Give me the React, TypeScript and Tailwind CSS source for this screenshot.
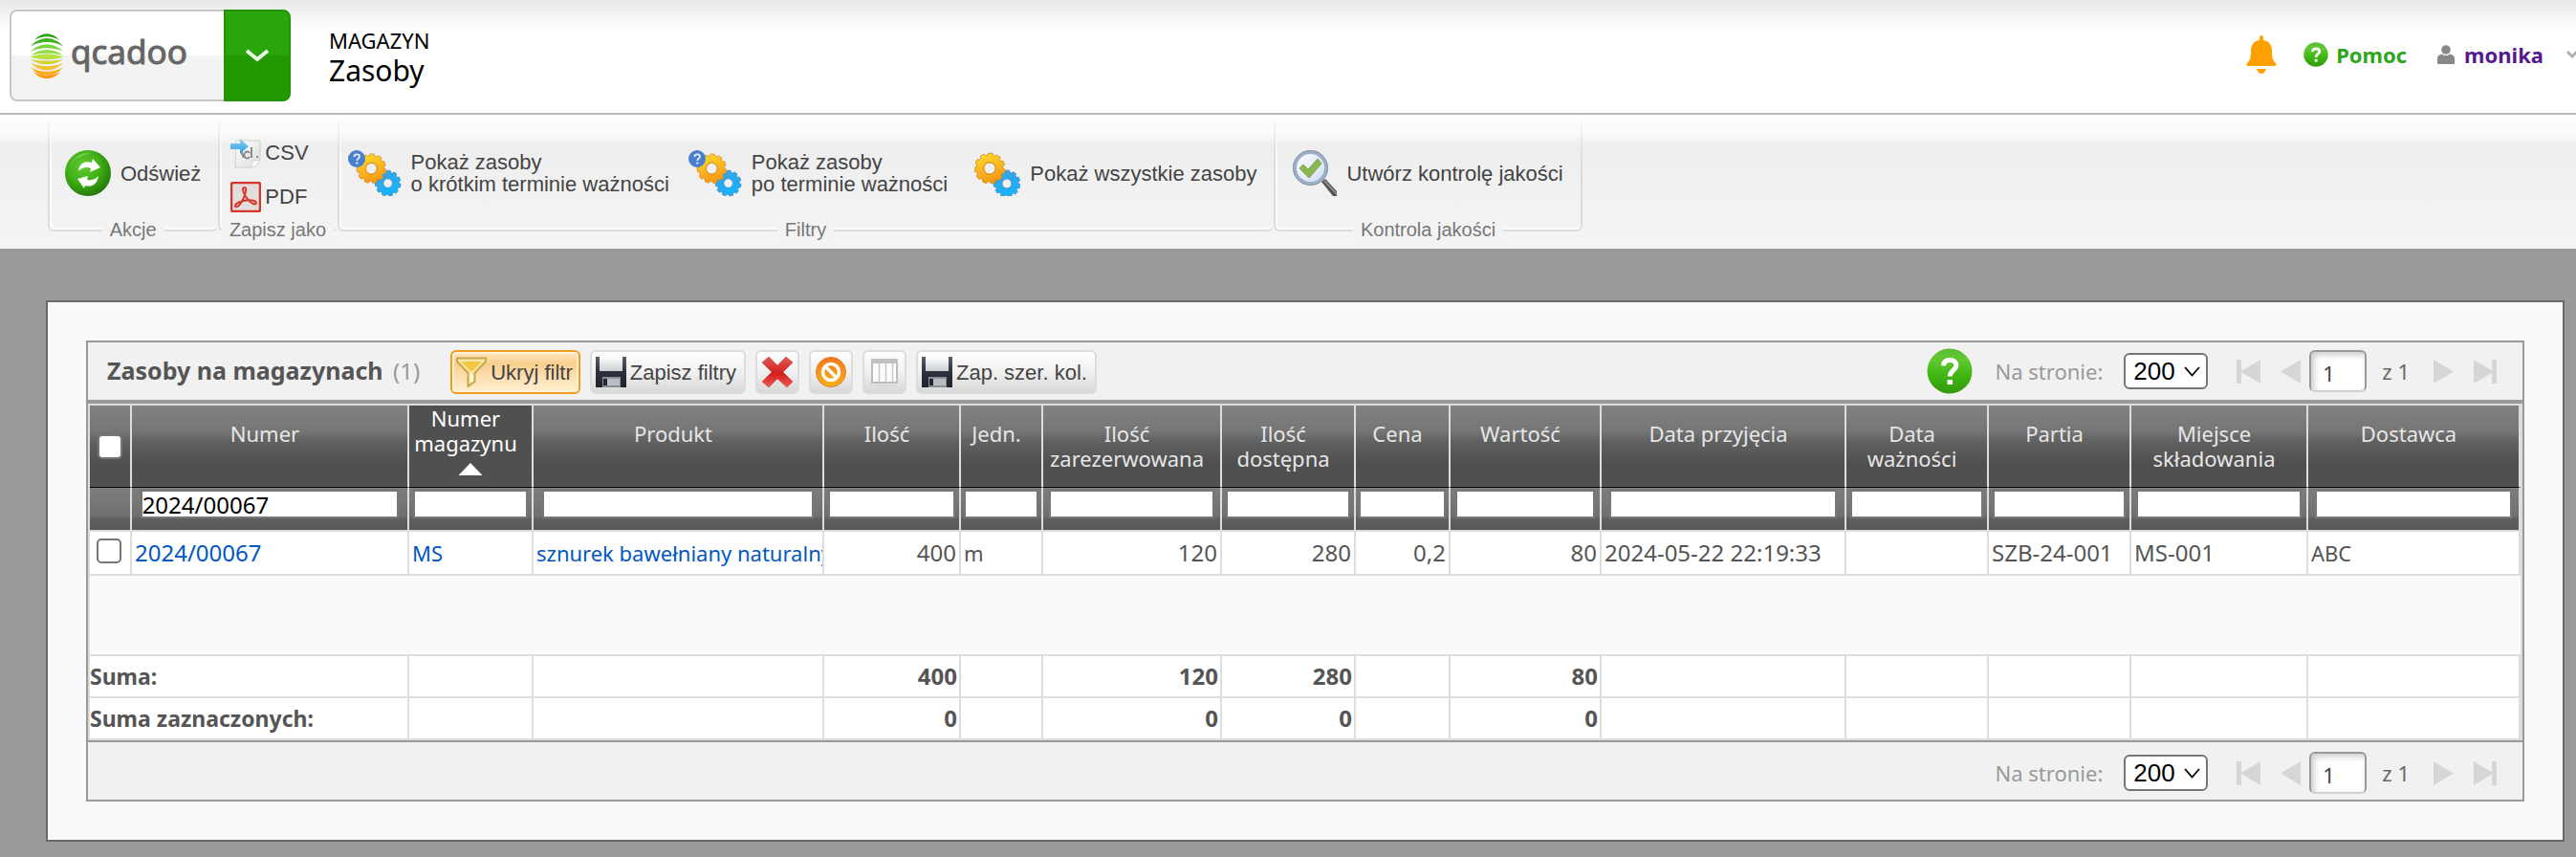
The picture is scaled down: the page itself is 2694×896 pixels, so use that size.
import type { ReactNode } from 'react';

const UI = "font-['Noto_Sans','Open_Sans',sans-serif]";
const ARIAL = "font-['Liberation_Sans',Arial,sans-serif]";

/* ---------- icons ---------- */

function gearPath(cx: number, cy: number, outer: number, inner: number, hole: number, teeth: number) {
  const step = (Math.PI * 2) / teeth;
  const at = (r: number, a: number) => `${(cx + r * Math.cos(a)).toFixed(2)} ${(cy + r * Math.sin(a)).toFixed(2)}`;
  let d = '';
  for (let i = 0; i < teeth; i++) {
    const a = i * step + 0.2;
    d += `${i ? 'L' : 'M'}${at(inner, a - step * 0.34)}L${at(outer, a - step * 0.24)}L${at(outer, a + step * 0.24)}L${at(inner, a + step * 0.34)}`;
  }
  return `${d}ZM${cx - hole} ${cy}a${hole} ${hole} 0 1 0 ${hole * 2} 0a${hole} ${hole} 0 1 0 ${-hole * 2} 0Z`;
}
const GOLD_GEAR = gearPath(16, 19, 16, 14, 6, 11);
const BLUE_GEAR = gearPath(34, 35, 14, 12, 5, 11);

function Defs() {
  return (
    <svg width="0" height="0" className="absolute" aria-hidden="true">
      <defs>
        <linearGradient id="gold" x1="0" y1="0" x2="0.3" y2="1">
          <stop offset="0" stopColor="#ffdf2e" />
          <stop offset="1" stopColor="#f79a12" />
        </linearGradient>
        <linearGradient id="blue" x1="0" y1="0" x2="0.4" y2="1">
          <stop offset="0" stopColor="#3f9fe0" />
          <stop offset="1" stopColor="#14b4ff" />
        </linearGradient>
        <radialGradient id="green" cx="0.4" cy="0.35" r="0.75">
          <stop offset="0" stopColor="#63cc33" />
          <stop offset="0.5" stopColor="#3fae14" />
          <stop offset="1" stopColor="#1c6a06" />
        </radialGradient>
        <linearGradient id="helpGreen" x1="0" y1="0" x2="0" y2="1">
          <stop offset="0" stopColor="#5cbb35" />
          <stop offset="0.25" stopColor="#62c932" />
          <stop offset="0.6" stopColor="#3fb512" />
          <stop offset="1" stopColor="#33980e" />
        </linearGradient>
        <linearGradient id="lens" x1="0" y1="0" x2="1" y2="1">
          <stop offset="0" stopColor="#ffffff" />
          <stop offset="1" stopColor="#cfdcf2" />
        </linearGradient>
        <linearGradient id="red" x1="0" y1="0" x2="0" y2="1">
          <stop offset="0" stopColor="#dd5b58" />
          <stop offset="0.55" stopColor="#d21f1c" />
          <stop offset="1" stopColor="#ee5a55" />
        </linearGradient>
        <linearGradient id="orange" x1="0" y1="0" x2="0" y2="1">
          <stop offset="0" stopColor="#f57a1c" />
          <stop offset="1" stopColor="#f6b211" />
        </linearGradient>
        <linearGradient id="floppy" x1="0" y1="0" x2="0" y2="1">
          <stop offset="0" stopColor="#5a606c" />
          <stop offset="0.5" stopColor="#2b303c" />
          <stop offset="1" stopColor="#20242e" />
        </linearGradient>
        <linearGradient id="label" x1="0" y1="0" x2="0" y2="1">
          <stop offset="0" stopColor="#ffffff" />
          <stop offset="1" stopColor="#c9ced1" />
        </linearGradient>
        <linearGradient id="arrow" x1="0" y1="0" x2="0" y2="1">
          <stop offset="0" stopColor="#8fd0f4" />
          <stop offset="1" stopColor="#2c9fdf" />
        </linearGradient>
        <linearGradient id="paper" x1="0" y1="0" x2="1" y2="1">
          <stop offset="0" stopColor="#ffffff" />
          <stop offset="1" stopColor="#dcdcdc" />
        </linearGradient>
      </defs>
    </svg>
  );
}

function LogoMark() {
  return (
    <svg width="34" height="48" viewBox="0 0 34 48" aria-hidden="true">
      <path d="M4 8C11 -1 23 -1 30 8C22 3 12 3 4 8Z" fill="#2e9f1a" />
      <path d="M0 14.500C9 3 25 3 34 14.500C25 8.500 9 8.500 0 14.500Z" fill="#43b324" />
      <path d="M0 20C9 10 25 10 34 20C25 15 9 15 0 20Z" fill="#74d63c" />
      <path d="M0 24C9 16 25 16 34 24C25 21 9 21 0 24Z" fill="#93e04a" />
      <path d="M0 25.500C9 21.500 25 21.500 34 25.500C25 29 9 29 0 25.500Z" fill="#b5e23f" />
      <path d="M0 28C9 30 25 30 34 28C25 35 9 35 0 28Z" fill="#d3d332" />
      <path d="M0 31.500C9 36.500 25 36.500 34 31.500C25 42 9 42 0 31.500Z" fill="#f3c12b" />
      <path d="M0 36C9 42.500 25 42.500 34 36C25 48 9 48 0 36Z" fill="#fbab1d" />
      <path d="M3 41C12 46.500 22 46.500 31 41C24 50.500 10 50.500 3 41Z" fill="#ff970a" />
    </svg>
  );
}

function HelpIcon({ size }: { size: number }) {
  return (
    <svg width={size} height={size} viewBox="0 0 48 48" aria-hidden="true">
      <circle cx="24" cy="24" r="23.500" fill="url(#helpGreen)" />
      <path d="M17.500 18.500c.3-4.300 3-6 6.700-6 4 0 6.600 2.200 6.600 5.500 0 5.200-6.600 5.300-6.600 11.500" fill="none" stroke="#fff" strokeWidth="5" />
      <rect x="21.500" y="33" width="5.500" height="5" fill="#fff" />
    </svg>
  );
}

function RefreshIcon() {
  return (
    <svg width="48" height="48" viewBox="0 0 48 48" aria-hidden="true">
      <circle cx="24" cy="24" r="24" fill="url(#green)" />
      <path d="M5 16C10 5 20 2 28 3C17 5 9 9 5 16Z" fill="#a8e58a" opacity="0.5" />
      <path d="M14 22C15 13 22 11 28 13L29 9L37 18L26 23L27 19C22 17 18 18 14 22Z" fill="#fff" />
      <path d="M35 27C34 36 27 39 21 37L20 40L13 30L24 27L23 31C27 32 31 31 35 27Z" fill="#fff" />
    </svg>
  );
}

function CsvIcon() {
  return (
    <svg width="32" height="32" viewBox="0 0 32 32" aria-hidden="true">
      <path d="M6 3H31V22C29 28 25 31 20 31H5Z" fill="url(#paper)" stroke="#cfcfcf" />
      <path d="M20 31C24 29 23 25 24 24C27 24 30 24 31 22C30 28 25 31 20 31Z" fill="#fff" stroke="#d4d4d4" />
      <path d="M11 14l3 7M20 16a3 3.500 0 1 0 0 4M22 10v11M28 19v2" fill="none" stroke="#8a8a8a" strokeWidth="2" />
      <path d="M0 6H10V1L19 9L10 17V12H0Z" fill="url(#arrow)" />
    </svg>
  );
}

function PdfIcon() {
  return (
    <svg width="32" height="32" viewBox="0 0 32 32" aria-hidden="true">
      <rect x="1" y="1" width="30" height="30" rx="2" fill="#e3dedb" stroke="#d8352c" strokeWidth="2.500" />
      <path d="M15 6C18 6 15 16 11 22C8 27 5 27 5 25C6 21 18 18 25 20C29 22 26 25 22 22C17 19 13 11 13 8C13 6 14 6 15 6Z" fill="none" stroke="#d8352c" strokeWidth="2" />
    </svg>
  );
}

function GearPair() {
  return (
    <>
      <path d={BLUE_GEAR} fill="url(#blue)" stroke="#3b86bd" strokeWidth="0.800" fillRule="evenodd" />
      <path d={GOLD_GEAR} fill="url(#gold)" stroke="#d9851a" strokeWidth="0.800" fillRule="evenodd" />
      <circle cx="16" cy="19" r="6.500" fill="none" stroke="#c98a3a" strokeOpacity="0.500" />
    </>
  );
}

function Gears() {
  return (
    <svg width="48" height="48" viewBox="0 0 48 48" aria-hidden="true">
      <GearPair />
    </svg>
  );
}

function GearsHelp() {
  return (
    <svg width="56" height="48" viewBox="0 0 56 48" aria-hidden="true">
      <g transform="translate(9 1) scale(0.960)">
        <GearPair />
      </g>
      <circle cx="9" cy="9" r="9" fill="#4a80cb" />
      <path d="M6.300 7c.1-1.800 1.300-2.600 2.900-2.600s2.800.8 2.800 2.300c0 2-2.700 2-2.700 4.400" fill="none" stroke="#e6effb" strokeWidth="1.800" />
      <rect x="8.400" y="12.500" width="2" height="2" fill="#e6effb" />
    </svg>
  );
}

function Magnifier() {
  return (
    <svg width="46" height="48" viewBox="0 0 46 48" aria-hidden="true">
      <path d="M30 33L34 30L46 43V48H42Z" fill="#555" />
      <path d="M33 32L46 46" stroke="#9a9a9a" strokeWidth="1.500" />
      <circle cx="18.500" cy="18.500" r="16.500" fill="url(#lens)" stroke="#9db0c6" strokeWidth="4" />
      <circle cx="18.500" cy="18.500" r="18" fill="none" stroke="#7e90a5" strokeWidth="0.800" />
      <path d="M7 19L11 15L16 20L26 9L30 14L17 29Z" fill="#8cb650" stroke="#6f9a3a" strokeWidth="0.800" />
    </svg>
  );
}

function Funnel() {
  return (
    <svg width="32" height="32" viewBox="0 0 32 32" aria-hidden="true">
      <path d="M1 1.500H31V5L19.500 17V26L12.500 31V17L1 5Z" fill="#f6e6ad" stroke="#c9a548" strokeWidth="2" />
      <path d="M5 5H27L17 15H15Z" fill="#f5c842" />
      <path d="M14.500 18H17.500V25L14.500 27Z" fill="#fff6d8" />
    </svg>
  );
}

function Floppy() {
  return (
    <svg width="32" height="32" viewBox="0 0 32 32" aria-hidden="true">
      <rect width="32" height="32" fill="url(#floppy)" />
      <rect x="4" y="0" width="24" height="15" fill="url(#label)" />
      <rect x="7" y="21" width="19" height="11" fill="#8b9095" />
      <rect x="12" y="23" width="13" height="7" fill="#b9bdbf" />
      <rect x="8" y="23" width="4" height="7" fill="#23272f" />
    </svg>
  );
}

function RedCross() {
  return (
    <svg width="32" height="32" viewBox="0 0 32 32" aria-hidden="true">
      <path d="M7 0L16 9L25 0L32 6L22 16L32 26L26 32L16 23L7 32L0 26L10 16L0 6Z" fill="url(#red)" stroke="#d8605c" strokeWidth="0.800" strokeLinejoin="round" />
    </svg>
  );
}

function Forbidden() {
  return (
    <svg width="32" height="32" viewBox="0 0 32 32" aria-hidden="true">
      <circle cx="16" cy="16" r="15.500" fill="url(#orange)" stroke="#e27a2a" />
      <circle cx="16" cy="16" r="8.500" fill="none" stroke="#fff" strokeWidth="3.500" />
      <path d="M10.500 10.500L21.500 21.500" stroke="#fff" strokeWidth="3.500" />
    </svg>
  );
}

function ColumnsIcon() {
  return (
    <svg width="32" height="32" viewBox="0 0 32 32" aria-hidden="true">
      <rect x="3" y="3" width="26" height="24" fill="#fdfdfd" stroke="#bdbdbd" strokeWidth="2" />
      <rect x="2" y="2" width="28" height="5" fill="#bfc2c5" />
      <path d="M10.500 7V26M17.500 7V26M24.500 7V26" stroke="#c9c9c9" strokeWidth="1.500" />
      <path d="M6 30H26" stroke="#cfcfcf" />
    </svg>
  );
}

function StepIcon({ kind }: { kind: 'first' | 'prev' | 'next' | 'last' }) {
  const tri = kind === 'first' || kind === 'prev' ? 'M25 0V25L4 12.500Z' : 'M1 0V25L22 12.500Z';
  return (
    <svg width="26" height="25" viewBox="0 0 26 25" aria-hidden="true">
      <path d={tri} fill="#d6d6d6" />
      {kind === 'first' && <rect x="0" y="0" width="5" height="25" fill="#d6d6d6" />}
      {kind === 'last' && <rect x="20" y="0" width="5" height="25" fill="#d6d6d6" />}
    </svg>
  );
}

/* ---------- header ---------- */

function Header() {
  return (
    <header className="flex h-[120px] items-start overflow-hidden border-b-2 border-[#b9b9b9] bg-[linear-gradient(to_bottom,#e8e8e8_0px,#ffffff_32px)] pt-[10px] pl-[10px]">
      <div className="flex h-24 shrink-0">
        <a href="#home" className="flex w-56 items-center gap-2 rounded-l-lg border-2 border-r-0 border-[#c8c8c8] bg-[linear-gradient(to_bottom,#ffffff_50%,#f3f3f3_50%)] pl-5 text-[#666]">
          <LogoMark />
          <span className={`${UI} pb-2 text-[35px] leading-10 [-webkit-text-stroke:1px_#666]`}>qcadoo</span>
        </a>
        <button type="button" aria-label="Menu" className="flex w-[70px] items-center justify-center rounded-r-lg border-2 border-[#1f9406] bg-[linear-gradient(to_bottom,#2ba50c_50%,#219a02_50%)]">
          <svg width="24" height="14" viewBox="0 0 24 14" aria-hidden="true">
            <path d="M1 2L12 11L23 2" fill="none" stroke="#eafbe4" strokeWidth="4" />
          </svg>
        </button>
      </div>
      <div className={`${UI} ml-10 pt-[18px] text-black`}>
        <div className="text-[22px] leading-7">MAGAZYN</div>
        <h1 className="text-[30px] leading-9">Zasoby</h1>
      </div>
      <nav className={`${UI} ml-auto flex h-24 shrink-0 items-center pb-[2px] text-[22px] font-bold`}>
        <button type="button" aria-label="Powiadomienia" className="mr-7">
          <svg width="32" height="40" viewBox="0 0 32 40" aria-hidden="true">
            <path d="M14 2a2 2 0 0 1 4 0v3c6 1 9 5 9 11 0 8 1 10 4 13 1 1 .5 3-1 3H2c-1.500 0-2-2-1-3 3-3 4-5 4-13C5 10 8 6 14 5Z" fill="#ffa000" />
            <path d="M11 35H21C20 38 18 40 16 40S12 38 11 35Z" fill="#ffa000" />
          </svg>
        </button>
        <a href="#pomoc" className="flex items-center gap-2 text-[#2fa51c]">
          <HelpIcon size={26} />
          Pomoc
        </a>
        <a href="#profil" className="ml-8 flex items-center gap-[10px] text-[#551a8b]">
          <svg width="18" height="20" viewBox="0 0 18 20" aria-hidden="true">
            <circle cx="9" cy="5" r="4.800" fill="#888" />
            <path d="M0 20V14C0 11 3 10 5 9.500C7 11.500 11 11.500 13 9.500C15 10 18 11 18 14V20Z" fill="#888" />
          </svg>
          monika
        </a>
        <svg className="-mr-[2px] ml-6" width="12" height="10" viewBox="0 0 12 10" aria-hidden="true">
          <path d="M1 2L6 7L11 2" fill="none" stroke="#b0b0b0" strokeWidth="3" />
        </svg>
      </nav>
    </header>
  );
}

/* ---------- ribbon ---------- */

function Group({ label, last, children, pad }: { label: string; last?: boolean; pad: string; children: ReactNode }) {
  return (
    <section className="relative flex flex-col">
      <div
        aria-hidden="true"
        className={`absolute inset-x-0 top-0 h-[122px] rounded-b-md border-b-2 border-l-2 border-[#dcdcdc] shadow-[inset_2px_-2px_0_#fbfbfb] [mask-image:linear-gradient(to_bottom,transparent_0px,#000_50px)] ${last ? 'border-r-2' : ''}`}
      />
      <div className={`relative flex h-[122px] items-center ${pad}`}>{children}</div>
      <h2 className="relative -mt-[14px] self-center bg-[#f3f3f3] px-2 text-[20px] leading-6 text-[#777]">{label}</h2>
    </section>
  );
}

function RibbonButton({ icon, lines }: { icon: ReactNode; lines: string[] }) {
  return (
    <button type="button" className="flex items-center gap-[10px] text-left whitespace-nowrap">
      {icon}
      <span className="leading-[23px]">
        {lines.map((l) => (
          <span key={l} className="block">{l}</span>
        ))}
      </span>
    </button>
  );
}

function Ribbon() {
  return (
    <div className={`${ARIAL} flex h-[140px] bg-[linear-gradient(to_bottom,#ffffff_0px,#fafafa_20px,#eeeeee_32px,#f4f4f4_130px)] pl-[50px] text-[22px] text-[#444]`}>
      <Group label="Akcje" pad="px-[18px]">
        <RibbonButton icon={<RefreshIcon />} lines={['Odśwież']} />
      </Group>
      <Group label="Zapisz jako" pad="pl-[13px] pr-[30px]">
        <div className="flex flex-col gap-[14px] pt-[3px]">
          {[{ t: 'CSV', i: <CsvIcon /> }, { t: 'PDF', i: <PdfIcon /> }].map((b) => (
            <button key={b.t} type="button" className="flex h-8 items-center gap-1">
              {b.i}
              {b.t}
            </button>
          ))}
        </div>
      </Group>
      <Group label="Filtry" pad="pl-[11px] pr-[18px]">
        <div className="flex gap-5">
          <RibbonButton icon={<GearsHelp />} lines={['Pokaż zasoby', 'o krótkim terminie ważności']} />
          <RibbonButton icon={<GearsHelp />} lines={['Pokaż zasoby', 'po terminie ważności']} />
          <span className="ml-2 flex">
            <RibbonButton icon={<Gears />} lines={['Pokaż wszystkie zasoby']} />
          </span>
        </div>
      </Group>
      <Group label="Kontrola jakości" last pad="px-5">
        <RibbonButton icon={<Magnifier />} lines={['Utwórz kontrolę jakości']} />
      </Group>
    </div>
  );
}

/* ---------- grid ---------- */

function ToolButton({ icon, text, label }: { icon: ReactNode; text?: string; label?: string }) {
  return (
    <button
      type="button"
      aria-label={label}
      className={`${ARIAL} flex h-[46px] items-center gap-1 rounded-md border-2 border-[#dcdcdc] bg-[linear-gradient(to_bottom,#ffffff,#f0f0f0_50%,#d8d8d8)] text-[22px] whitespace-nowrap text-[#444] ${text ? 'pr-2 pl-1' : 'px-[5px]'}`}
    >
      {icon}
      {text}
    </button>
  );
}

function Pager({ id }: { id: string }) {
  return (
    <div className={`${UI} flex items-center text-[22px]`}>
      <label htmlFor={`${id}-size`} className="mr-[22px] text-[#999]">Na stronie:</label>
      <span className="relative mr-[30px] flex">
        <select id={`${id}-size`} defaultValue="200" className={`${ARIAL} h-[38px] w-[88px] appearance-none rounded-md border-2 border-[#767676] bg-white pl-2 text-[26px] leading-8 text-black`}>
          <option>200</option>
        </select>
        <svg className="pointer-events-none absolute top-[14px] right-2" width="17" height="11" viewBox="0 0 17 11" aria-hidden="true">
          <path d="M1 1L8.500 9.500L16 1" fill="none" stroke="#000" strokeWidth="1.700" />
        </svg>
      </span>
      <button type="button" aria-label="Pierwsza strona" className="mr-4"><StepIcon kind="first" /></button>
      <button type="button" aria-label="Poprzednia strona" className="mr-2"><StepIcon kind="prev" /></button>
      <input aria-label="Strona" defaultValue="1" className="h-11 w-[60px] rounded-md border-2 border-[#999] border-b-[#d0d0d0] bg-white pt-1 pl-3 text-[#444] shadow-[inset_3px_3px_6px_#ccc]" />
      <span className="mr-6 ml-4 text-[#666]">z 1</span>
      <button type="button" aria-label="Następna strona" className="mr-4"><StepIcon kind="next" /></button>
      <button type="button" aria-label="Ostatnia strona"><StepIcon kind="last" /></button>
    </div>
  );
}

type Column = { head: string[]; value?: string; right?: boolean; link?: boolean; sum?: string; selected?: string; width: string; sorted?: boolean; filter?: string };

const columns: Column[] = [
  { head: ['Numer'], value: '2024/00067', link: true, width: 'w-[290px]', filter: '2024/00067' },
  { head: ['Numer', 'magazynu'], value: 'MS', link: true, width: 'w-[130px]', sorted: true },
  { head: ['Produkt'], value: 'sznurek bawełniany naturalny', link: true, width: 'w-[304px]' },
  { head: ['Ilość'], value: '400', right: true, sum: '400', selected: '0', width: 'w-[143px]' },
  { head: ['Jedn.'], value: 'm', width: 'w-[86px]' },
  { head: ['Ilość', 'zarezerwowana'], value: '120', right: true, sum: '120', selected: '0', width: 'w-[187px]' },
  { head: ['Ilość', 'dostępna'], value: '280', right: true, sum: '280', selected: '0', width: 'w-[140px]' },
  { head: ['Cena'], value: '0,2', right: true, width: 'w-[99px]' },
  { head: ['Wartość'], value: '80', right: true, sum: '80', selected: '0', width: 'w-[158px]' },
  { head: ['Data przyjęcia'], value: '2024-05-22 22:19:33', width: 'w-[256px]' },
  { head: ['Data', 'ważności'], width: 'w-[149px]' },
  { head: ['Partia'], value: 'SZB-24-001', width: 'w-[149px]' },
  { head: ['Miejsce', 'składowania'], value: 'MS-001', width: 'w-[185px]' },
  { head: ['Dostawca'], value: 'ABC', width: 'w-[222px]' },
];

const HEAD_BG = 'bg-[linear-gradient(to_bottom,#828282,#757575_32%,#636363_42%,#4f4f4f_72%,#505050)]';
const FILTER_BG = 'bg-[linear-gradient(to_bottom,#7d7d7d,#6f6f6f_68%,#606060_72%,#585858)]';
const CHECK = 'block size-[26px] appearance-none rounded-[5px] border-2 border-[#767676] bg-white';

function SumRow({ label, field }: { label: string; field: 'sum' | 'selected' }) {
  return (
    <tr className="h-11 bg-white text-left font-bold">
      <th scope="row" colSpan={2} className="border-r-2 border-b-2 border-[#ddd] px-0 text-[23px]">{label}</th>
      {columns.slice(1).map((c) => (
        <td key={c.head.join(' ')} className="border-r-2 border-b-2 border-[#ddd] pr-[2px] text-right text-[24px]">{c[field]}</td>
      ))}
    </tr>
  );
}

function Grid() {
  return (
    <table className={`${UI} w-full table-fixed border-separate border-spacing-0 text-[#555]`}>
      <colgroup>
        <col className="w-11" />
        {columns.map((c) => (
          <col key={c.head.join(' ')} className={c.width} />
        ))}
      </colgroup>
      <thead>
        <tr className="h-[86px]">
          <th className={`border-r-2 border-b border-r-[#ddd] border-b-black p-0 ${HEAD_BG}`}>
            <input type="checkbox" aria-label="Zaznacz wszystkie" className={`${CHECK} mx-auto`} />
          </th>
          {columns.map((c) => (
            <th
              key={c.head.join(' ')}
              className={`border-r-2 border-b border-r-[#ddd] border-b-black p-0 align-top text-[22px] leading-[26px] font-normal ${c.sorted ? 'bg-[#505050] text-white' : `pt-4 text-[#e6e6e6] ${HEAD_BG}`}`}
            >
              {c.head.map((h) => (
                <span key={h} className="block pr-[10px]">{h}</span>
              ))}
              {c.sorted && (
                <svg className="mx-auto mt-2" width="26" height="13" viewBox="0 0 26 13" aria-hidden="true">
                  <path d="M13 0L25.500 13H0.500Z" fill="#fff" />
                </svg>
              )}
            </th>
          ))}
        </tr>
        <tr className="h-[46px]">
          <td className={`border-r-2 border-b-2 border-[#ddd] ${FILTER_BG}`} />
          {columns.map((c) => (
            <td key={c.head.join(' ')} className={`border-r-2 border-b-2 border-[#ddd] p-0 pt-[2px] align-top ${FILTER_BG}`}>
              <input
                aria-label={`Filtr: ${c.head.join(' ')}`}
                defaultValue={c.filter}
                className="mx-auto block h-[30px] w-[94%] border-2 border-[#777] bg-white text-[24px] leading-6 text-black"
              />
            </td>
          ))}
        </tr>
      </thead>
      <tbody>
        <tr className="h-[46px] bg-white">
          <td className="border-r-2 border-b-2 border-[#ddd] p-0 pb-1">
            <input type="checkbox" aria-label="Zaznacz 2024/00067" className={`${CHECK} ml-[7px]`} />
          </td>
          {columns.map((c) => (
            <td
              key={c.head.join(' ')}
              className={`overflow-hidden border-r-2 border-b-2 border-[#ddd] px-[3px] py-0 leading-8 whitespace-nowrap ${c.right ? 'text-right' : ''} ${/\d/.test(c.value ?? '') ? 'text-[24px]' : 'text-[22px]'}`}
            >
              {c.link ? <a href="#zasob" className="text-[#0057c2]">{c.value}</a> : c.value}
            </td>
          ))}
        </tr>
      </tbody>
      <tfoot>
        <tr className="h-[84px]">
          <td colSpan={15} className="border-b-2 border-[#ddd]" />
        </tr>
        <SumRow label="Suma:" field="sum" />
        <SumRow label="Suma zaznaczonych:" field="selected" />
      </tfoot>
    </table>
  );
}

export default function App() {
  return (
    <div className="min-h-screen bg-[#9a9a9a]">
      <Defs />
      <Header />
      <Ribbon />
      <main className="mt-[54px] mr-3 mb-4 ml-12 border-2 border-[#696969] bg-[#fafafa] p-10">
        <section className="border-2 border-[#999]">
          <div className="flex h-16 items-center border-b-4 border-[#999] bg-[#f1f1f1] pr-[26px] pl-5">
            <h2 className={`${UI} text-[25px] font-bold whitespace-nowrap text-[#555]`}>
              Zasoby na magazynach <span className="ml-1 text-[24px] font-normal text-[#999]">(1)</span>
            </h2>
            <div className="ml-8 flex gap-[10px] pt-[2px]">
              <button type="button" className={`${ARIAL} flex h-[46px] items-center gap-1 rounded-md border-2 border-[#f39c1f] bg-[linear-gradient(to_bottom,#fde6c0,#f9cf8e_30%,#fbdcaa_55%,#fff0d0)] pr-[6px] pl-1 text-[22px] whitespace-nowrap text-[#444] shadow-[inset_0_0_0_2px_#fff3d8]`}>
                <Funnel />
                Ukryj filtr
              </button>
              <ToolButton icon={<Floppy />} text="Zapisz filtry" />
              <ToolButton icon={<RedCross />} label="Wyczyść filtr" />
              <ToolButton icon={<Forbidden />} label="Wyczyść zapisany filtr" />
              <ToolButton icon={<ColumnsIcon />} label="Wybierz kolumny" />
              <ToolButton icon={<Floppy />} text="Zap. szer. kol." />
            </div>
            <div className="ml-auto flex items-center gap-6">
              <button type="button" aria-label="Pomoc">
                <HelpIcon size={48} />
              </button>
              <Pager id="top" />
            </div>
          </div>
          <div className="border-x-2 border-t-2 border-[#ddd]">
            <Grid />
          </div>
          <div className="flex h-[62px] items-center justify-end border-t-2 border-[#999] bg-[#f1f1f1] pt-1 pr-[26px]">
            <Pager id="bottom" />
          </div>
        </section>
      </main>
    </div>
  );
}
